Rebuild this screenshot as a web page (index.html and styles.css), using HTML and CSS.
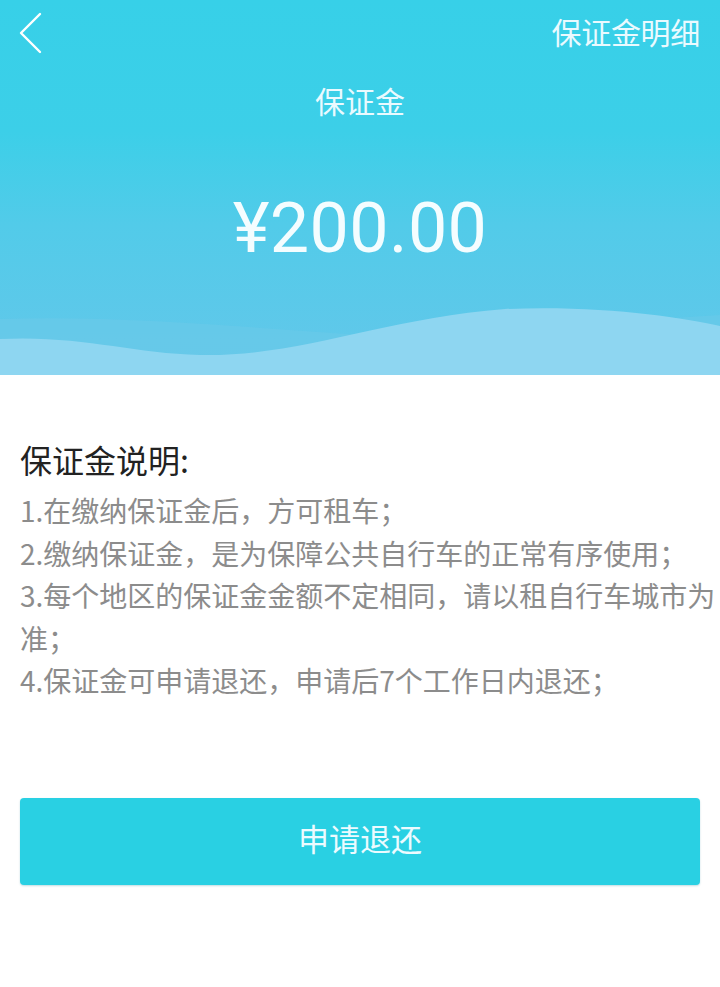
FILE: index.html
```html
<!DOCTYPE html>
<html lang="zh-CN">
<head>
<meta charset="utf-8">
<title>保证金</title>
<link rel="stylesheet" href="styles.css">
</head>
<body>
<div class="page">
  <header class="hero">
    <svg class="wave" viewBox="0 0 720 100" preserveAspectRatio="none" aria-hidden="true">
      <path d="M0 44 C 120 40, 240 52, 360 60 C 460 66, 560 50, 720 40 L720 100 L0 100 Z" fill="#6fc9e9" opacity="0.45"/>
      <path d="M0 64 C 80 60, 130 78, 200 80 C 300 82, 380 44, 505 34 C 600 30, 680 42, 720 51 L720 100 L0 100 Z" fill="#8ed6f1"/>
    </svg>
    <div class="nav">
      <svg class="back" width="26" height="44" viewBox="0 0 26 44" aria-hidden="true">
        <path d="M22 3 L3 22 L22 41" fill="none" stroke="#ffffff" stroke-width="2.4" stroke-linecap="round" stroke-linejoin="round"/>
      </svg>
      <span class="nav-link">保证金明细</span>
    </div>
    <div class="title">保证金</div>
    <div class="amount">¥200.00</div>
  </header>
  <main class="content">
    <h2 class="sec-title">保证金说明:</h2>
    <ol class="rules">
      <li>1.在缴纳保证金后，方可租车；</li>
      <li>2.缴纳保证金，是为保障公共自行车的正常有序使用；</li>
      <li>3.每个地区的保证金金额不定相同，请以租自行车城市为准；</li>
      <li>4.保证金可申请退还，申请后7个工作日内退还；</li>
    </ol>
    <button class="refund">申请退还</button>
  </main>
</div>
</body>
</html>
```

FILE: styles.css
```css
* { box-sizing: border-box; }
html, body { margin: 0; padding: 0; background: #ffffff; }
body {
  font-family: "Noto Sans CJK SC", "Noto Sans", Roboto, sans-serif;
  width: 720px;
  height: 987px;
  overflow: hidden;
}
.page { display: flex; flex-direction: column; }
.hero {
  position: relative;
  height: 375px;
  background: linear-gradient(180deg, #37d0e8 0%, #3ccfe8 35%, #52cbe9 60%, #63c7ea 100%);
  color: #ffffff;
  display: flex;
  flex-direction: column;
  align-items: center;
  overflow: hidden;
}
.wave {
  position: absolute;
  left: 0;
  bottom: 0;
  width: 720px;
  height: 100px;
}
.nav {
  position: relative;
  width: 100%;
  height: 62px;
  display: flex;
  align-items: flex-start;
  justify-content: space-between;
  padding: 10px 20px 0 18px;
}
.back { margin-top: 1px; }
.nav-link {
  font-size: 30px;
  line-height: 42px;
  color: #eafaff;
  letter-spacing: -0.3px;
}
.title {
  position: relative;
  font-size: 30px;
  line-height: 40px;
  margin-top: 18px;
  color: #eafaff;
}
.amount {
  position: relative;
  font-family: Roboto, "Noto Sans", sans-serif;
  font-size: 70px;
  line-height: 80px;
  margin-top: 68px;
  color: #f4fdff;
  letter-spacing: 0.4px;
}
.content {
  padding: 0 2px 0 20px;
  display: flex;
  flex-direction: column;
}
.sec-title {
  margin: 62px 0 0 0;
  font-weight: 400;
  font-size: 32px;
  line-height: 44px;
  color: #222222;
}
.rules {
  list-style: none;
  margin: 8px 0 0 0;
  padding: 0;
  font-size: 28px;
  line-height: 42.5px;
  color: #8c8c8c;
}
.rules li { margin: 0; }
.refund {
  margin: 96px 18px 0 0;
  height: 87px;
  width: 680px;
  border: none;
  border-radius: 4px;
  background: #29d0e3;
  color: #ecfbff;
  font-family: "Noto Sans CJK SC", "Noto Sans", sans-serif;
  font-size: 31px;
  line-height: 40px;
  padding: 0 0 6px 0;
  box-shadow: 0 1px 2px rgba(0, 120, 140, 0.25);
}
```
